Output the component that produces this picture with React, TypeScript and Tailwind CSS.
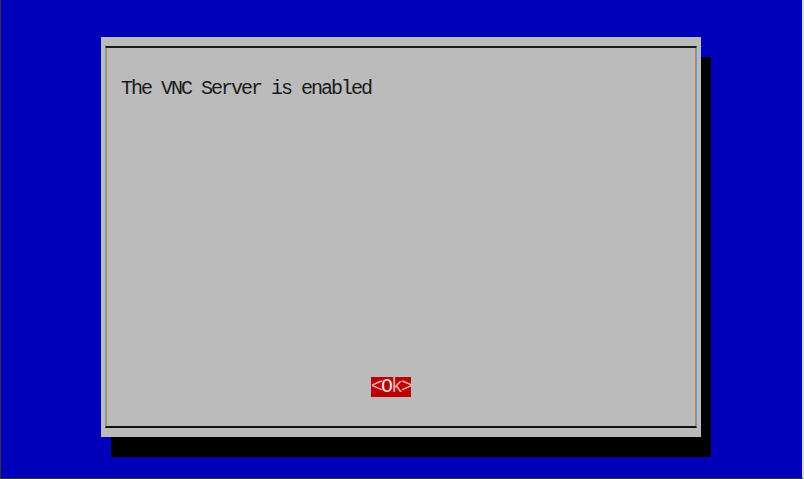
const App = () => {
  return (
    <div className="w-[804px] h-[479px] bg-[#0000bb] border-l border-l-[#333] border-b border-b-[#333] border-r-2 border-r-[#d8d8d8] overflow-hidden">
      <div className="pl-[100px] pt-[37px]">
        <div className="w-[600px] h-[400px] bg-[#bbbbbb] shadow-[10px_20px_0_0_#000] px-[4px] py-[9px]">
          <div className="h-full flex flex-col border-t-2 border-t-[#1c1c1c] border-b-2 border-b-[#111] border-l border-l-[#5ea0d8] border-r border-r-[#5ea0d8] shadow-[inset_1px_0_0_#c08a4a,inset_-1px_0_0_#c08a4a]">
            <div
              className="pl-[15px] pt-[31px] text-[20px] leading-[20px] tracking-[-2px] text-[#1a1a1a]"
              style={{ fontFamily: '"Liberation Mono", monospace' }}
            >
              The VNC Server is enabled
            </div>
            <div className="mt-[278px] pl-[265px] flex">
              <div
                className="bg-[#bb0000] h-[20px] w-[40px] text-[20px] leading-[20px] tracking-[-2px] whitespace-pre"
                style={{ fontFamily: '"Liberation Mono", monospace' }}
              >
                <span className="text-[#e8a8b0]">{"<"}</span>
                <span className="text-[#f4e4e4]">O</span>
                <span className="text-[#e8a8b0]">{"k>"}</span>
              </div>
            </div>
          </div>
        </div>
      </div>
    </div>
  );
};

export default App;
